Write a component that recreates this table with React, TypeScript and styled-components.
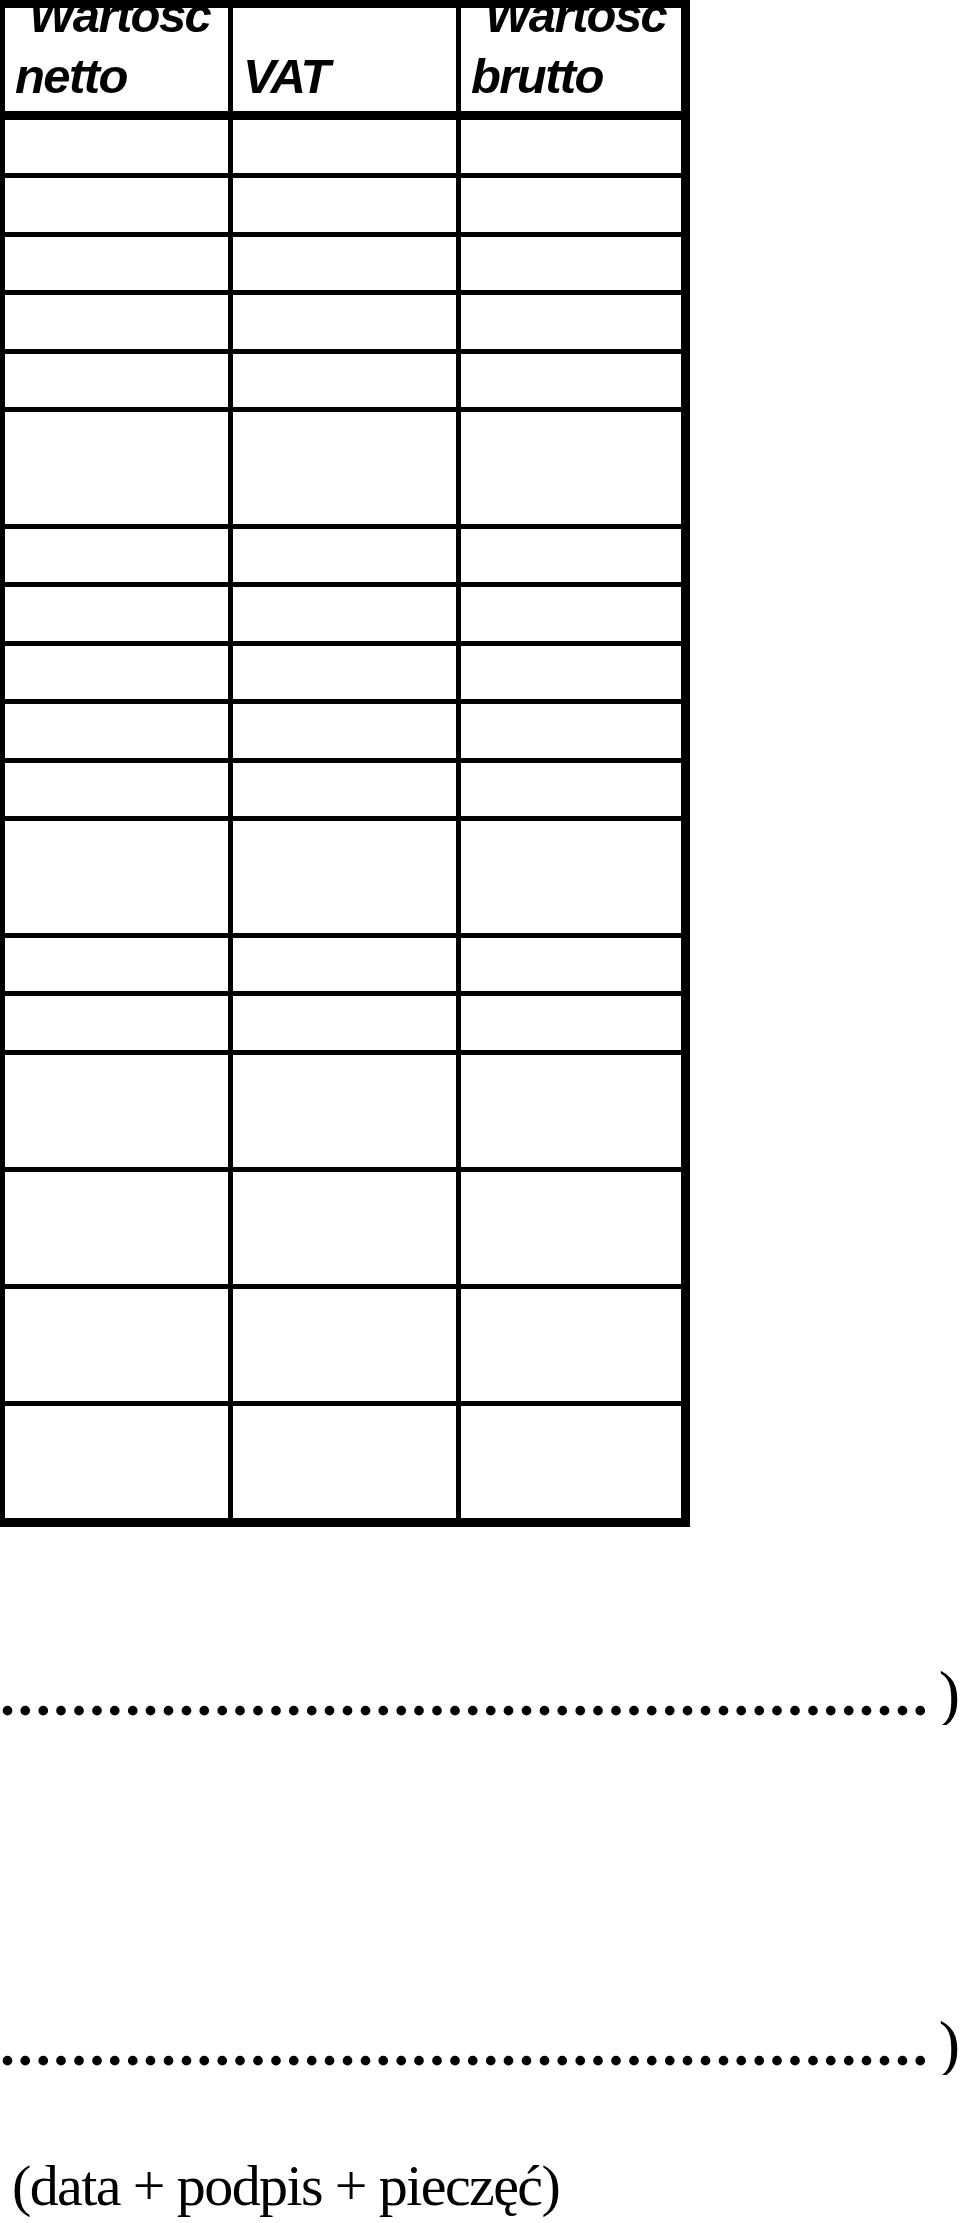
import React from "react";
import styled, { createGlobalStyle } from "styled-components";

const GlobalStyle = createGlobalStyle`
  html, body {
    margin: 0;
    padding: 0;
    background: #ffffff;
  }
  body {
    font-family: "Liberation Serif", "Times New Roman", serif;
    color: #000000;
  }
`;

const Page = styled.div`
  width: 960px;
  height: 2223px;
  display: flex;
  flex-direction: column;
  overflow: hidden;
  background: #ffffff;
`;

const Table = styled.div`
  width: 690px;
  box-sizing: border-box;
  border-style: solid;
  border-color: #000000;
  border-width: 8px 9px 9px 5px;
  display: flex;
  flex-direction: column;
`;

const Row = styled.div<{ $height: number; $line: number }>`
  display: grid;
  grid-template-columns: 228px 228px 1fr;
  height: ${(p) => p.$height + p.$line}px;
  box-sizing: border-box;
  border-bottom: ${(p) => p.$line}px solid #000000;
`;

const HeaderCell = styled.div<{ $indent: number }>`
  box-sizing: border-box;
  border-right: 5px solid #000000;
  padding: 0 6px 4px 10px;
  overflow: hidden;
  display: flex;
  align-items: flex-end;
  font-family: "Liberation Sans", Arial, sans-serif;
  font-weight: 700;
  font-style: italic;
  font-size: 49px;
  line-height: 61px;
  letter-spacing: -1.6px;
  text-indent: ${(p) => p.$indent}px;
  &:last-child {
    border-right: none;
  }
`;

const Cell = styled.div`
  box-sizing: border-box;
  border-right: 5px solid #000000;
  &:last-child {
    border-right: none;
  }
`;

const SignatureLine = styled.div<{ $top: number }>`
  margin-top: ${(p) => p.$top}px;
  width: 960px;
  display: flex;
  justify-content: flex-end;
  align-items: baseline;
  overflow: hidden;
  white-space: nowrap;
  height: 62px;
  line-height: 62px;
`;

const Dots = styled.span`
  flex-shrink: 0;
  font-family: "Liberation Serif", "Times New Roman", serif;
  font-weight: 700;
  font-size: 60px;
  letter-spacing: 2.9px;
`;

const Paren = styled.span`
  flex-shrink: 0;
  margin-left: 8px;
  font-family: "Liberation Serif", "Times New Roman", serif;
  font-weight: 400;
  font-size: 64px;
`;

const Caption = styled.div`
  margin-top: 79px;
  padding-left: 12px;
  font-family: "Liberation Serif", "Times New Roman", serif;
  font-size: 58px;
  line-height: 64px;
  letter-spacing: -1.6px;
  white-space: nowrap;
`;

const rowUnits = [1, 1, 1, 1, 1, 2, 1, 1, 1, 1, 1, 2, 1, 1, 2, 2, 2, 2];
const headers = [
  { label: "Wartosc netto", indent: 14 },
  { label: "VAT", indent: 0 },
  { label: "Wartosc brutto", indent: 14 },
];

const dots = ".".repeat(58);

export default function App() {
  return (
    <>
      <GlobalStyle />
      <Page>
        <Table>
          <Row $height={103} $line={9}>
            {headers.map((h) => (
              <HeaderCell key={h.label} $indent={h.indent}>
                <span>{h.label}</span>
              </HeaderCell>
            ))}
          </Row>
          {rowUnits.map((u, i) => (
            <Row
              key={i}
              $height={u === 1 ? 53.4 : 112}
              $line={i === rowUnits.length - 1 ? 0 : 5}
            >
              <Cell />
              <Cell />
              <Cell />
            </Row>
          ))}
        </Table>
        <SignatureLine $top={136}>
          <Dots>{dots}</Dots>
          <Paren>)</Paren>
        </SignatureLine>
        <SignatureLine $top={288}>
          <Dots>{dots}</Dots>
          <Paren>)</Paren>
        </SignatureLine>
        <Caption>(data + podpis + pieczęć)</Caption>
      </Page>
    </>
  );
}
